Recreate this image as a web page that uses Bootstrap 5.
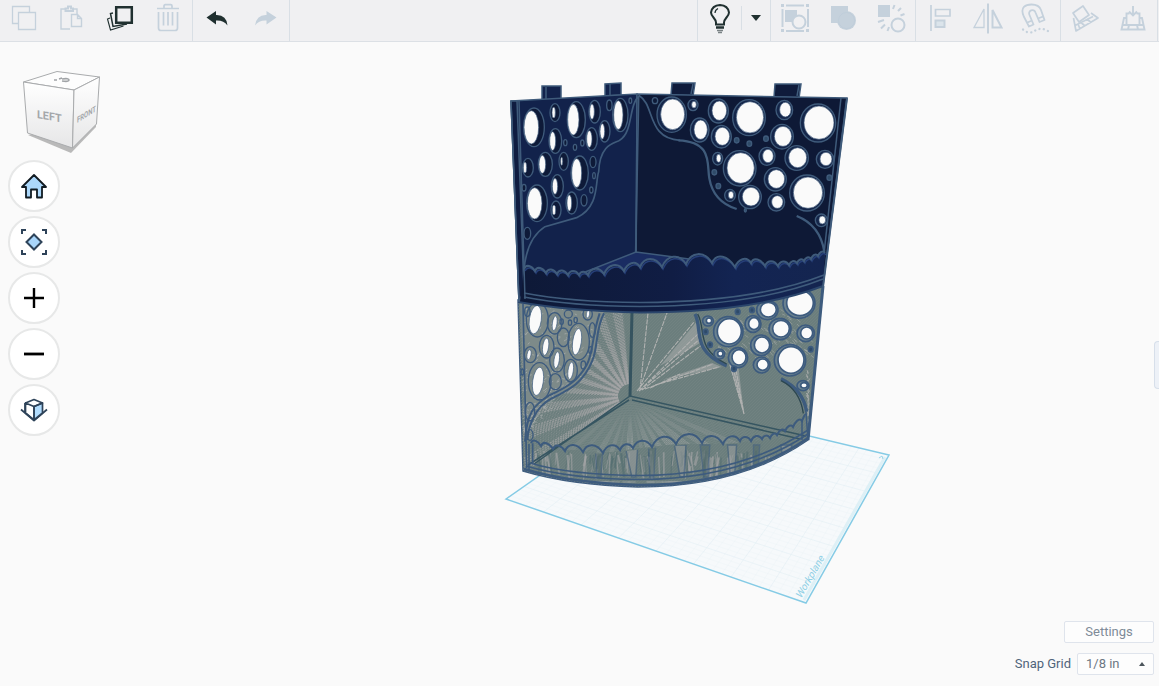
<!DOCTYPE html>
<html lang="en">
<head>
<meta charset="utf-8">
<meta name="viewport" content="width=device-width, initial-scale=1">
<title>3D editor</title>
<link href="https://cdn.jsdelivr.net/npm/bootstrap@5.3.0/dist/css/bootstrap.min.css" rel="stylesheet">
<style>
body { font-family: Roboto, "Noto Sans", sans-serif; font-size: 13px; background: #fafafa; }
.toolbar { background: #f0f0f2; border-bottom: 1px solid #dce0e5; height: 42px; }
.tool-group { border-color: #d9dfe5; border-style: solid; border-width: 0; }
.tools-left .tool-group { border-right-width: 1px; }
.tools-right .tool-group { border-left-width: 1px; }
.tools-right { border-right: 1px solid #d9dfe5; margin-right: 1px; }
.tool { width: 48px; height: 36px; color: #c5d1dc; background: none; border: 0; padding: 0; }
.tool svg { width: 32px; height: 32px; }
.tool.active-tool { color: #203030; }
.tool-bulb { width: 43px; }
.tool-caret { width: 28px; }
.tool-rule { width: 1px; height: 24px; background: #d9dfe5; margin-top: 6px; }
.side-nav { top: 26px; left: 8px; width: 94px; }
.view-cube { width: 94px; height: 88px; }
.round-btn { width: 52px; height: 52px; background: #fff; border: 2px solid #e7e8e8; padding: 0; }
.round-btn svg { width: 28px; height: 28px; }
.panel-handle { width: 5px; height: 48px; right: 0; top: 299px; background: #edf1f7; border: 1px solid #d7dfea; border-right: 0; padding: 0; }
.grid-controls { right: 5px; bottom: 11px; gap: 10px; }
.settings-btn, .snap-select { height: 22px; background: #fdfdfd; border: 1px solid #dfe4ec; border-radius: 2px; font-size: 13px; line-height: 18px; padding: 0; }
.settings-btn { width: 90px; color: #7e8b98; }
.snap-select { width: 77px; color: #6c7783; appearance: none; padding-left: 8px; }
.snap-label { color: #50647a; margin-right: 6px; }
.snap-caret { right: 9px; top: 9px; border: 3px solid transparent; border-top: 0; border-bottom: 4px solid #4c555c; pointer-events: none; }
.narrow { font-family: "Liberation Sans Narrow", Roboto, sans-serif; }
</style>
</head>
<body>
<div class="d-flex flex-column vh-100 overflow-hidden">
<header class="toolbar d-flex justify-content-between flex-shrink-0">
  <div class="tools-left d-flex">
    <div class="tool-group d-flex">
      <button class="tool" aria-label="Copy"><svg viewBox="0 0 32 32" fill="none" stroke="currentColor" stroke-width="1.3"><path d="M10 21.500H4.500V4.500h17V10M10.500 10.500h17v17h-17z"/></svg></button>
      <button class="tool" aria-label="Paste"><svg viewBox="0 0 32 32" fill="none" stroke="currentColor" stroke-width="1.400"><path d="M14 27H5V7h4M17 7h4v5"/><path d="M9.500 9V6.500h2.500V4.500h3v2H17V9z" stroke-width="2"/><path d="M15.500 12.500h6l4 4v8h-10zM21.500 12.500v4h4"/></svg></button>
      <button class="tool active-tool" aria-label="Duplicate"><svg viewBox="0 0 32 32" fill="none" stroke="currentColor"><path d="M6 16l-2.500 1 3 11 13-4" stroke-width="1.100"/><path d="M9 11l-2.500 .5 2.500 13 14-2.500" stroke-width="1.500"/><path d="M12.200 5.200h15.600v15.600H12.200z" stroke-width="2.500"/></svg></button>
      <button class="tool" aria-label="Delete"><svg viewBox="0 0 32 32" fill="none" stroke="currentColor" stroke-width="1.700"><path d="M5 6.500h22M12 6V4q0-1.300 1.300-1.300h5.400Q20 2.700 20 4v2M6.500 10v16q0 2.500 2.500 2.500h14q2.500 0 2.500-2.500V10M11.500 10v13.500M16 10v13.500M20.500 10v13.500"/></svg></button>
    </div>
    <div class="tool-group d-flex">
      <button class="tool active-tool" aria-label="Undo"><svg viewBox="0 0 32 32"><path fill="currentColor" d="M5.500 15.500L15 9v4q10.500-.5 11.500 10.500Q22.500 18 15 18.500v4z"/></svg></button>
      <button class="tool" aria-label="Redo"><svg viewBox="0 0 32 32"><path fill="currentColor" d="M27.500 15.500L17.500 9v4Q7.500 12.500 6 23.500q4-5.500 11.500-5v4z"/></svg></button>
    </div>
  </div>
  <div class="tools-right d-flex">
    <div class="tool-group d-flex">
      <button class="tool tool-bulb active-tool" aria-label="Show all"><svg viewBox="0 0 32 32" fill="none" stroke="currentColor" stroke-width="2"><path d="M12 22.500v-2q0-2-2.500-5Q7 12.500 7 10.500q1-7 9-7.500 8 .5 9 7.500 0 2-2.500 5T20 20.500v2z"/><path d="M11 11q0-3 3-4.500" stroke-width="1.200"/><path d="M12 25.500h8" stroke-width="2.500"/><path d="M13 28.500h6M14 30.500h4" stroke="#7a8285" stroke-width="1.500"/></svg></button>
      <span class="tool-rule"></span>
      <button class="tool tool-caret active-tool" aria-label="Visibility options"><svg viewBox="0 0 32 32"><path fill="currentColor" d="M9 13h10l-5 6z"/></svg></button>
    </div>
    <div class="tool-group d-flex">
      <button class="tool" aria-label="Group selection"><svg viewBox="0 0 32 32"><path d="M7 3.500h18M7 29h18M3.500 7v18M29 7v18" stroke="currentColor" stroke-width="2"/><path fill="currentColor" d="M2 2h3v3H2zM27 2h3v3h-3zM2 27h3v3H2zM27 27h3v3h-3zM6 8h12v12H6z"/><circle cx="20" cy="20" r="6.500" fill="#f0f0f2" stroke="currentColor" stroke-width="2"/></svg></button>
      <button class="tool" aria-label="Group"><svg viewBox="0 0 32 32" fill="currentColor"><rect x="4" y="4" width="17" height="17"/><circle cx="19.500" cy="18.500" r="9.500"/><circle cx="19.500" cy="18.500" r="8" fill="none" stroke="#b9c9d6" stroke-width=".5"/></svg></button>
      <button class="tool" aria-label="Ungroup"><svg viewBox="0 0 32 32" fill="none" stroke="currentColor" stroke-width="2"><path fill="currentColor" stroke="none" d="M3 3h12v12H3z"/><circle cx="23" cy="23" r="6.500"/><path d="M18 7l1.500-4M23 9l3-3M25.500 13.500l4-1.500M9 18l-6 2M10 22.500l-4 4M14 25l-1.500 4"/></svg></button>
    </div>
    <div class="tool-group d-flex">
      <button class="tool" aria-label="Align"><svg viewBox="0 0 32 32" fill="none" stroke="currentColor" stroke-width="1.700"><path d="M7 3v26"/><path d="M11.500 7.500H26V14H11.500z"/><path d="M11.500 18.500h9V25h-9z" fill="#dbe4eb" stroke-width="2"/></svg></button>
      <button class="tool" aria-label="Mirror"><svg viewBox="0 0 32 32" fill="none" stroke="currentColor"><path d="M16 1.500v30" stroke-width="2"/><path d="M12 7v18.500H2z" stroke-width="1.300"/><path d="M20.500 8v17.500h9z" stroke-width="2"/></svg></button>
      <button class="tool" aria-label="Snap"><svg viewBox="0 0 32 32" fill="none" stroke="currentColor" stroke-width="1.800" stroke-linejoin="round"><path d="M9 24.500L3.800 14.500C-.5 5 6 2.500 11.500 2.500S20 5 21 8l3.500 10-5 2-4-9.500C14 6 7.500 8.500 9.500 13l4 9.500zM7.500 20.500l4.500-2M18 16.500l5-2"/><path d="M3 27.500l4 2.500 5 .500 4-2.500 5-1.500 4 1 4 2" stroke-width="2.300" stroke-linecap="round" stroke-dasharray="0.100 4.400"/></svg></button>
    </div>
    <div class="tool-group d-flex">
      <button class="tool" aria-label="Workplane"><svg viewBox="0 0 32 32" fill="none" stroke="currentColor" stroke-width="1.700" stroke-linejoin="round"><path d="M4.500 16L7 29l22-13-7-5M6 23.500l18-9M12 20.500l4 3.500M18 17l4 3.500M9 22l2 5"/><path d="M4 11l10-7 6 9-10 7z" fill="#f0f0f2"/></svg></button>
      <button class="tool" aria-label="Drop to workplane"><svg viewBox="0 0 32 32" fill="none" stroke="currentColor" stroke-width="1.900"><path d="M9 16H7L4.500 27.500h23L25 16h-2M6 23h20M12 23l-1 4.500M20 23l1 4.500M9.500 23V11.500h3M19.500 11.500h3V23M16 4v9M12 9.500l4 4 4-4"/></svg></button>
    </div>
  </div>
</header>

<main class="flex-grow-1 position-relative overflow-hidden">
  <svg class="position-absolute w-100 h-100" viewBox="0 42 1159 644" role="img" aria-label="Corner shelf on the workplane">
    <defs>
      <linearGradient id="band"><stop offset="0" stop-color="#0e1937"/><stop offset=".5" stop-color="#101d44"/><stop offset=".7" stop-color="#132452"/><stop offset="1" stop-color="#142550"/></linearGradient>
      <pattern id="mesh" width="3" height="3" patternUnits="userSpaceOnUse"><path d="M0 3L3 0" stroke="#768785" stroke-width=".5"/></pattern>
      <clipPath id="leftClip"><path d="M520 303L632 310L630 396L534 465L524 470z"/></clipPath>
      <clipPath id="floorClip"><path d="M534 463L630 397L806 437L770 440L723 444L676 444L640 448L603 453L541 447z"/></clipPath>
      <clipPath id="lipClip"><path d="M524 445L600 454L680 445L770 440L806 420V440Q740 486 640 486Q570 484 524 471z"/></clipPath>
    </defs>

    <!-- workplane -->
    <path d="M506 499L650 398L889 455L806 603z" fill="#f6f9fb"/>
    <g id="planeGrid" stroke="#dfedf3" stroke-width=".5"></g>
    <path d="M804 600L885 457" stroke="#def0f6" stroke-width="3"/>
    <path d="M506 499L650 398L889 455L806 603z" fill="none" stroke="#85cbe5" stroke-width="1.500"/>
    <text class="narrow" transform="translate(801 599) rotate(-60) skewX(-12)" font-size="10" fill="#8fd0e6">Workplane</text>
    <path d="M879 458l3-2 1 3" fill="none" stroke="#9ed6e9"/>

    <!-- transparent lower shelf -->
    <g stroke="#3d5b7e" stroke-width="1.500" fill="none">
      <path d="M518 300L523 471Q570 485 638 487Q740 487 808 440L823 286z" fill="#6b7e7d"/>
      <path d="M518 300L523 471Q570 485 638 487Q740 487 808 440L823 286z" fill="url(#mesh)" stroke="none"/>
      <g id="leftRays" clip-path="url(#leftClip)" stroke="#aaa9aa"></g>
      <path d="M520 303L605 313C594 330 600 347 592 361C584 380 568 390 552 398C535 408 530 425 526 445z" fill="#7d8a89" stroke="none"/>
      <g id="leftSpecks" stroke="#aaadad" stroke-width="1"></g>
      <g id="floorRays" clip-path="url(#floorClip)" fill="#b0b0b0" stroke="none"></g>
      <g id="lipRays" clip-path="url(#lipClip)"></g>
      <g stroke="#b1b2b1" stroke-width="1.100" stroke-dasharray="5 1">
        <path d="M637 391L694 322M639 391L700 332M639 391L701 338M642 390L703 344M640 390L648 313M640 388L667 313M645 389L713 364M655 385L719 367M650 388L680 374M730 365L744 414M733 367L744 414M736 370L744 414"/>
      </g>
      <g fill="#b1b2b1" fill-opacity=".5" stroke="none"><path d="M660 366L698 320L702 342zM662 380L712 363L722 367zM729 363H738L744 414z"/></g>
      <g id="rightSpecks" stroke="#a4a8a7" stroke-width="1"></g>
      <path d="M632 312L630 396" stroke-width="3" stroke="#35535f"/>
      <path d="M534 464L630 396L806 436M528 465L629 400M632 400L800 439" stroke="#365561"/>
      <g transform="translate(505 240) scale(.33333)" stroke-width="6">
        <path d="M297 220C270 270 280 320 262 362C235 430 190 450 140 475C90 500 70 560 67 600M284 220C260 290 265 340 245 375C220 420 190 440 135 465C85 495 65 520 60 605"/>
        <path d="M54 192L65 685M83 610v60" stroke-width="5"/>
        <g id="lowLeft" stroke-width="4"></g>
      </g>
      <g transform="translate(670 240) scale(.33333)">
        <path d="M75 222C100 270 60 330 170 378M333 416Q400 450 410 515" stroke-width="10"/>
        <path d="M83 222C110 270 75 325 170 372M333 422Q390 450 400 520" stroke-width="4" stroke="#2c4650"/>
        <g id="lowRight" stroke-width="5"></g>
      </g>
      <path id="lowScallop" stroke-width="2"/>
      <path d="M530 463Q570 475 640 475.500Q740 475 808 430M526 466Q570 479 640 479.500Q740 479 808 434" />
      <path d="M524 469Q570 483 638 485Q740 485 808 438" stroke-width="2.500"/>
      <path d="M823 286L808 440" stroke-width="3"/>
      <path d="M806 412l2 28M802 420v20M529 444v26"/>
    </g>

    <!-- solid upper shelf -->
    <g stroke="#3f5b7b" stroke-width="1.500" fill="#12224b">
      <path d="M542 100V86H561V99zM605 96V84L621 83V95z"/>
      <path d="M671 95L672 83H695L693 96zM774 97L775 84H801L799 98z" fill="#0f1b3b"/>
      <path d="M546 100V87M610 96V84M691 94l2-10M797 96l2-11"/>
      <path d="M511 101L637 94L636 270L519 302z"/>
      <path d="M637 94L847 98L823 286L636 290z" fill="#0e1936"/>
      <path d="M511 101L517 101L524 290L519 302z" fill="#0f1c40"/>
      <path d="M575 276L636 252L720 263L700 290H590z" fill="#1a2c62"/>
      <path d="M841 98L822 272" fill="none"/>
    </g>
    <g transform="translate(500 75) scale(.33333)" fill="none" stroke="#3f5b7b" stroke-width="5">
      <path d="M72 585Q80 490 135 455L230 428C300 395 285 320 296 290C300 200 350 205 360 195C400 170 385 90 418 62C465 90 440 190 540 196M416 65L407 532"/>
      <g id="upLeft" stroke-width="4"></g>
      <g transform="translate(510 0)">
        <path d="M25 196C130 200 110 270 118 310Q130 380 200 402M380 423Q450 450 463 530" stroke-width="7"/>
        <g id="upRight" stroke-width="4"></g>
      </g>
    </g>
    <path id="upBand" fill="url(#band)"/>
    <g fill="none" stroke="#3f5b7b" stroke-width="1.500">
      <path id="upScallopBack" stroke="#263f78" stroke-width="1.500" transform="translate(1 2)"/>
      <path id="upScallop" stroke-width="2"/>
      <path d="M524 293Q570 302 640 302.500Q755 302 824 275M524 297Q570 306 640 306.500Q755 306 823 279"/>
      <path d="M518 302Q570 311 640 312.500Q755 312 823 286" stroke="#2b466c" stroke-width="2"/>
      <path d="M519 101L525 299M511 101L519 302"/>
      <path d="M847 98L823 287" stroke-width="2"/>
    </g>
  </svg>

  <nav class="side-nav position-absolute d-flex flex-column gap-1" aria-label="View controls">
    <svg class="view-cube" viewBox="8 68 94 88">
      <defs><linearGradient id="face" x2="0" y2="1"><stop offset="0" stop-color="#fff"/><stop offset="1" stop-color="#e6e6e7"/></linearGradient></defs>
      <path d="M28 135L71 153L96 127V120z" fill="#b9b9b9"/>
      <g stroke="#a9abad" stroke-width="1" stroke-linejoin="round">
        <path d="M23.500 82L57 71.500L99.500 77L74 90z" fill="#fdfdfd"/>
        <path d="M23.500 82L74 90L72.500 148L27.500 133z" fill="url(#face)"/>
        <path d="M74 90L99.500 77L96.500 124L72.500 148z" fill="url(#face)"/>
      </g>
      <text class="narrow" transform="translate(37 118) rotate(10) skewX(10)" font-size="11" font-weight="700" fill="#a4a7aa">LEFT</text>
      <text class="narrow" transform="translate(77 123) rotate(-32) skewX(-32)" font-size="7" font-weight="700" fill="#a4a7aa">FRONT</text>
      <path d="M62 81q7 1 7-1t-7-1M59 79l3-1M54 80h3" fill="none" stroke="#a0a3a6" stroke-width="1.600"/>
    </svg>
    <div class="d-flex flex-column gap-1 mt-0">
      <button class="round-btn rounded-circle" aria-label="Home view"><svg viewBox="0 0 28 28"><path d="M14 3L2 15h4v10.500h5v-8h6v8h5V15h4z" fill="#acd8fb" stroke="#111b22" stroke-width="1.800" stroke-linejoin="round"/></svg></button>
      <button class="round-btn rounded-circle" aria-label="Fit view"><svg viewBox="0 0 28 28" fill="none" stroke="#2e4359" stroke-width="2"><path d="M2 6V2h4M22 2h4v4M26 22v4h-4M6 26H2v-4"/><path d="M14 6.500l7.500 7.500-7.500 7.500L6.500 14z" fill="#a9d6fb"/></svg></button>
      <button class="round-btn rounded-circle" aria-label="Zoom in"><svg viewBox="0 0 28 28" stroke="#000" stroke-width="2.400"><path d="M4 14h20M14 4v20"/></svg></button>
      <button class="round-btn rounded-circle" aria-label="Zoom out"><svg viewBox="0 0 28 28" stroke="#000" stroke-width="2.800"><path d="M4 14h20"/></svg></button>
      <button class="round-btn rounded-circle" aria-label="Orthographic view"><svg viewBox="0 0 28 28" fill="none" stroke="#2e4359" stroke-width="1.700" stroke-linejoin="round"><path d="M1 13.500L14 24.500 27 13.500M5 16v-9"/><path d="M14 10.500l8.500-3.500v10L14 24z" fill="#b1dcfd"/><path d="M5.500 7L14 3.500 22.500 7 14 10.500zM5.500 7v10l8.500 7V10.500z"/></svg></button>
    </div>
  </nav>

  <button class="panel-handle position-absolute rounded-start-1" aria-label="Open shapes panel"></button>

  <div class="grid-controls position-absolute d-flex flex-column align-items-end">
    <button class="settings-btn">Settings</button>
    <div class="d-flex align-items-center">
      <label class="snap-label" for="snap">Snap Grid</label>
      <div class="position-relative d-flex">
        <select class="snap-select" id="snap"><option>1/8 in</option><option>1/4 in</option></select>
        <span class="snap-caret position-absolute"></span>
      </div>
    </div>
  </div>
</main>
</div>
<script src="https://cdn.jsdelivr.net/npm/bootstrap@5.3.0/dist/js/bootstrap.bundle.min.js"></script>
<script>
const put = (id, html) => { document.getElementById(id).innerHTML = html; };
const oval = (x, y, rx, ry, attrs) => `<ellipse cx="${x}" cy="${y}" rx="${rx}" ry="${ry}" ${attrs}/>`;
const line = (a, b, c, d, attrs = '') => `<path d="M${a} ${b}L${c} ${d}" ${attrs}/>`;
let seed = 7;
const rnd = () => (seed = (seed * 16807) % 2147483647) / 2147483647;

// workplane grid, in perspective
let grid = '';
const mix = (p, q, t) => [p[0] + (q[0] - p[0]) * t, p[1] + (q[1] - p[1]) * t];
const A = [506, 499], B = [650, 398], C = [889, 455], D = [806, 603];
for (let i = 1; i < 32; i++) {
  const t = i / 32, o = `opacity="${i % 4 ? .3 : .9}"`;
  grid += line(...mix(A, B, t), ...mix(D, C, t), o) + line(...mix(A, D, t), ...mix(B, C, t), o);
}
put('planeGrid', grid);

// holes: outer ring, then the see-through part [cx, cy, rx, ry, inner cx, inner rx, inner ry]
const sideHoles = (id, list, fill) => put(id, list.map(h =>
  oval(h[0], h[1], h[2], h[3], `fill="${fill}"`) + (h[4] ? oval(h[4], h[1], h[5], h[6], 'fill="#fafafa" stroke-width="2"') : '')).join(''));
sideHoles('upLeft', [[102,157,31,58,94,22,50],[165,113,15,27,161,5,16],[229,134,27,54,220,17,46],[284,110,17,34,276,7,23],[328,91,8,16],[361,120,23,50,355,14,43],[391,77,4,8],[166,198,19,37,158,9,28],[275,192,17,34,268,8,25],[314,169,16,32,307,7,23],[84,278,16,28,75,5,16],[136,268,21,36,127,10,27],[191,259,14,27,185,3,12],[239,294,26,51,230,15,43],[279,261,9,17],[172,334,18,35,165,8,24],[111,385,31,55,104,22,47],[168,405,15,27,162,5,15],[215,384,17,33,208,7,24],[252,376,9,17],[82,475,10,18],[72,338,6,10],[196,203,5,9],[225,217,5,9],[247,204,5,9],[282,302,4,9],[274,345,5,9],[465,77,8,9]], '#0e1a38');
sideHoles('lowLeft', [[97,239,33,52,91,18,43],[149,250,22,32,149,7,22],[221,305,32,55,216,13,40],[125,320,22,34,122,9,26],[156,360,22,36,155,8,25],[104,424,34,56,99,16,43],[197,392,20,34,197,8,26],[248,222,14,18,249,5,12],[76,344,18,24,72,6,15],[151,425,18,24],[175,292,18,28],[262,270,9,22],[75,515,14,28],[170,245,5,8],[195,248,5,8],[212,240,5,8],[190,222,12,12],[235,375,7,12],[256,330,5,10],[52,396,4,9],[67,215,8,14],[75,585,9,16]], 'none');
document.querySelectorAll('#lowLeft ellipse[fill="#fafafa"]').forEach(e => {
  e.setAttribute('transform', `rotate(8 ${e.getAttribute('cx')} ${e.getAttribute('cy')})`);
});

const frontHoles = (id, list, dots, ring, shade) => put(id,
  list.map(h => oval(h[0] - 3, h[1] + 1, h[2] + 8, h[3] + 7, `fill="${shade}"`) + oval(h[0], h[1], h[2], h[3], `fill="#fafafa" stroke-width="${ring}"`)).join('') +
  dots.map(d => oval(d[0], d[1], 7, 8, 'fill="#2f4b69"')).join(''));
frontHoles('upRight', [[8,118,36,46],[72,89,7,10],[148,107,22,29],[240,127,41,47],[346,104,17,22],[447,143,45,50],[92,164,20,29],[157,184,22,27],[339,184,26,30],[146,250,7,12],[212,279,41,46],[294,243,16,20],[383,248,27,30],[468,252,18,20],[319,312,25,28],[414,353,44,47],[183,360,8,11],[243,365,26,28],[322,381,17,19],[457,435,10,12]], [[200,196],[238,206],[288,191],[478,308],[133,292],[145,333]], 2, '#15264a');
put('upRight', document.getElementById('upRight').innerHTML + oval(226, 406, 3, 5, 'fill="#2f4b69"'));
frontHoles('lowRight', [[295,209,24,22],[390,189,40,38],[178,274,36,38],[252,251,16,18],[333,266,25,25],[410,279,18,18],[276,315,23,24],[207,352,21,23],[278,374,17,17],[363,360,39,40],[402,436,10,8],[117,242,8,8],[151,341,8,8]], [[203,215],[246,210],[107,275],[120,314],[192,386],[422,328]], 5, '#6b8290');

// scalloped lips
const scallop = pts => pts.slice(1).reduce((s, p, i) => {
  const q = pts[i], len = p[0] - q[0], lift = Math.min(len * .48, 13);
  return s + `C${q[0] + len * .2} ${q[1] - lift} ${p[0] - len * .3} ${p[1] - lift} ${p[0]} ${p[1]}`;
}, `M${pts[0][0]} ${pts[0][1]}`);
const up = scallop([[524,269],[535,271],[546,273],[557,274],[568,275],[579,275],[588,275],[604,274],[624,271],[640,267],[662,267],[686,264],[712,263],[735,267],[751,263],[765,266],[778,266],[789,265],[797,263],[804,261],[811,259],[818,256],[825,253]]);
document.getElementById('upScallop').setAttribute('d', up);
document.getElementById('upScallopBack').setAttribute('d', up);
document.getElementById('upBand').setAttribute('d', up + 'L823 286Q755 312 640 312.500Q570 311 520 302z');
document.getElementById('lowScallop').setAttribute('d', scallop([[531,443],[541,446],[553,449],[565,451],[583,452],[603,453],[620,450],[633,448],[652,447],[676,444],[702,443],[723,444],[740,441],[751,441],[762,439],[770,438],[777,435],[785,431],[793,427],[802,421],[806,415]]));

// surface shimmer on the transparent part
let rays = '';
for (let i = 0; i < 110; i++) {
  const a = Math.PI * (.80 + i / 110 * .68), on = Math.sin(i * .55) > 0;
  rays += line(630 + Math.cos(a) * 12, 396 + Math.sin(a) * 12, 630 + Math.cos(a) * 170, 396 + Math.sin(a) * 170, `stroke-width="${on ? 1.4 : .9}" stroke-dasharray="${on ? '2 1' : '1 2'}" stroke-dashoffset="${i % 3}" opacity="${on ? .65 : .4}"`);
}
put('leftRays', rays);
rays = '';
[[2.42,.03,.35],[2.28,.03,.3],[2.08,.05,.5],[1.9,.04,.6],[1.76,.02,.4],[1.57,.075,.85],[1.35,.03,.5],[1.21,.06,.75],[1.03,.05,.7],[.86,.06,.7],[.7,.05,.6],[.56,.04,.5],[.42,.03,.4]].forEach(([a, w, o]) => {
  const p = (ang, r) => `${630 + Math.cos(ang) * r} ${398 + Math.sin(ang) * r}`;
  for (let k = -2; k <= 2; k++) {
    const m = a + k * w / 2.5;
    rays += `<path d="M${p(m, 8 + rnd() * 10)}L${p(m - w / 7, 190)}L${p(m + w / 7, 190)}z" opacity="${o}"/>`;
  }
});
for (let r = 10; r < 180; r += 4) rays += `<ellipse cx="630" cy="398" rx="${r}" ry="${r * .42}" fill="none" stroke="#788987" stroke-width="1" opacity=".7"/>`;
put('floorRays', rays);
rays = '';
for (let i = 0; i < 120; i++) {
  const x = 535 + rnd() * 270, y = 450 + rnd() * 8;
  rays += line(x, y, x + (rnd() - .5) * 8, y + 8 + rnd() * 20, `stroke="${rnd() > .4 ? '#a5a5a6' : '#526c70'}" stroke-width="${(.6 + rnd() * 1.5).toFixed(1)}" opacity=".6"`);
}
for (let i = 0; i < 8; i++) {
  const x = 590 + i * 27 + rnd() * 8;
  rays += `<path d="M${x} 445h${6 + rnd() * 8}l-2 32h-4z" fill="${i % 2 ? '#9b9fa0' : '#536b6c'}" opacity=".55"/>`;
}
for (let i = 0; i < 30; i++) {
  const x = 580 + rnd() * 130;
  rays += line(x, 482, x + 8, 482, 'stroke="#949d9c" stroke-width="1.500" opacity=".6"');
}
put('lipRays', rays);
let specks = '';
for (let i = 0; i < 260; i++) {
  const y = 308 + rnd() * 125, w = y < 365 ? 72 : 72 - (y - 365), x = 522 + rnd() * Math.max(w, 8);
  specks += line(x, y, x + 2, y - 3 + rnd() * 4, 'opacity=".75"');
}
put('leftSpecks', specks);
specks = '';
for (let i = 0; i < 190; i++) {
  const y = 305 + rnd() * 55, x = 710 + rnd() * 104;
  if (y > 315 || x > 760) specks += line(x, y, x + 3, y + 1 + rnd() * 3, 'opacity=".6"');
}
for (let i = 0; i < 35; i++) { const y = 370 + rnd() * 50; specks += line(806 + rnd() * 4, y, 808, y + 3); }
put('rightSpecks', specks);
</script>
</body>
</html>
